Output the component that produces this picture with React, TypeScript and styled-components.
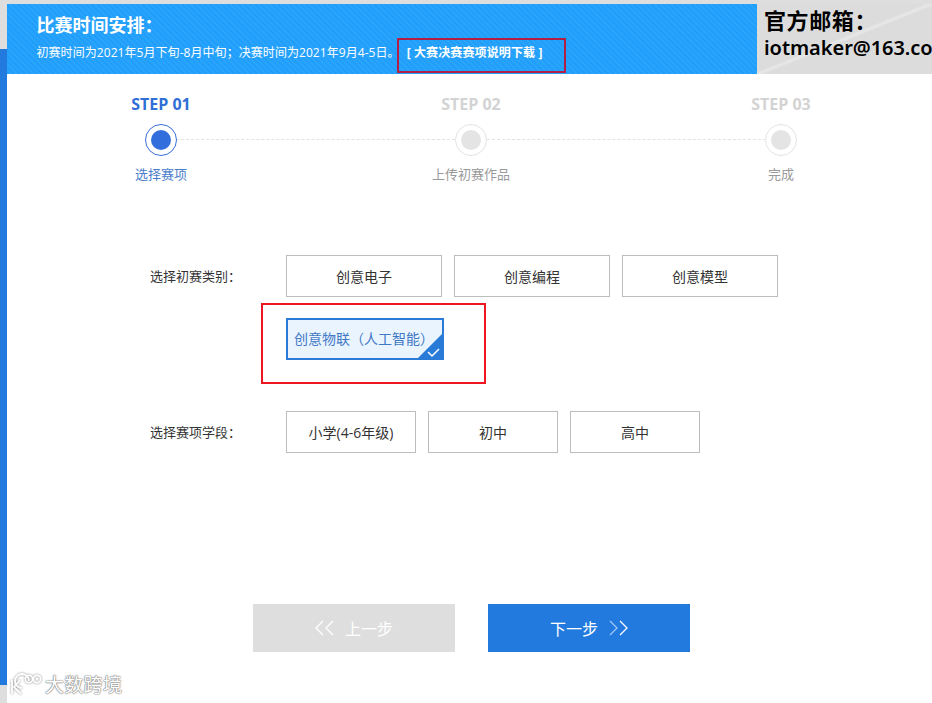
import React from "react";
import styled, { createGlobalStyle } from "styled-components";

const Global = createGlobalStyle`
  html, body { margin: 0; padding: 0; height: 703px; overflow: hidden; background: #fff; }
  * { box-sizing: border-box; }
  body { font-family: "Open Sans", "Noto Sans CJK SC", sans-serif; }
`;
const Page = styled.div`
  position: relative; width: 932px; height: 703px; display: flex; overflow: hidden; background: #fff;
`;
const Rail = styled.div`
  width: 7px; height: 703px; flex: none; display: flex; flex-direction: column;
  background: #dedede;
`;
const RailBlue = styled.div`
  margin-top: 49px; height: 636px; background: #227ade;
`;
const Main = styled.div`flex: 1; display: flex; flex-direction: column; min-width: 0;`;
const TopEdge = styled.div`height: 4px; background: #dedede; flex: none;`;
const Header = styled.div`display: flex; height: 70px; flex: none;`;
const Banner = styled.div`
  width: 750px; padding: 9px 0 0 29.5px; color: #fff; position: relative;
  background: repeating-linear-gradient(45deg, #1f9efb 0, #1f9efb 2px, #2aa3fb 2px, #2aa3fb 4px);
`;
const BannerTitle = styled.div`font-size: 18px; line-height: 24px; font-weight: 700;`;
const BannerText = styled.div`
  font-size: 12px; line-height: 17px; margin-top: 7px; display: flex; white-space: nowrap; letter-spacing: 0.06px;
`;
const BannerLink = styled.span`font-weight: 700; margin-left: 7px; letter-spacing: 0.12px;`;
const Mail = styled.div`
  flex: 1; min-width: 0; overflow: hidden; padding: 3px 0 0 7px; color: #000; white-space: nowrap;
  background: linear-gradient(158deg, #dcdcdc 0 48%, #e6e6e6 49.5% 50.5%, #dcdcdc 52% 100%);
`;
const MailTitle = styled.div`font-size: 22px; line-height: 27px; font-weight: 700; letter-spacing: 0.6px;`;
const MailAddress = styled.div`font-size: 20px; line-height: 28px; font-weight: 600; letter-spacing: -0.05px; font-family: "Noto Sans", sans-serif;`;

const Steps = styled.div`
  margin: 20px 0 0 109px; width: 710px; display: flex; justify-content: space-between; flex: none; position: relative;
`;
const Step = styled.div`
  width: 90px; display: flex; flex-direction: column; align-items: center; position: relative; z-index: 1;
`;
const StepLabel = styled.div<{ $on?: boolean }>`
  font-size: 16px; line-height: 20px; font-weight: 700; color: ${(p) => (p.$on ? "#2f6fd6" : "#d3d3d3")};
`;
const Dot = styled.div<{ $on?: boolean }>`
  width: 32px; height: 32px; margin-top: 10px; border-radius: 50%; background: #fff;
  border: 1px solid ${(p) => (p.$on ? "#3a6fd8" : "#e4e4e4")};
  display: flex; align-items: center; justify-content: center;
  &::after { content: ""; width: 20px; height: 20px; border-radius: 50%; background: ${(p) => (p.$on ? "#336fdc" : "#e4e4e4")}; }
`;
const StepName = styled.div<{ $on?: boolean }>`
  font-size: 13px; line-height: 18px; margin-top: 9px; white-space: nowrap; color: ${(p) => (p.$on ? "#4a7cc9" : "#999")};
`;
const Line = styled.div`
  position: absolute; left: 45px; right: 45px; top: 45px; border-top: 1px dashed #e2e2e2;
`;

const Form = styled.div`margin-top: 72px; flex: none;`;
const Row = styled.div`display: flex; align-items: flex-start; margin-bottom: 51px;`;
const RowLabel = styled.div`
  width: 279px; flex: none; padding: 12px 45px 0 0; text-align: right; font-size: 13px; line-height: 18px; color: #333;
`;
const Options = styled.div`display: flex; flex-wrap: wrap; gap: 21px 12px; width: 500px;`;
const Option = styled.div<{ $w: number; $on?: boolean }>`
  position: relative; overflow: hidden; height: 42px; width: ${(p) => p.$w}px;
  display: flex; align-items: center; justify-content: center;
  font-size: 14px; white-space: nowrap;
  padding-right: ${(p) => (p.$on ? "2px" : "0")};
  padding-bottom: ${(p) => (p.$on ? "2px" : "0")};
  border: ${(p) => (p.$on ? "2px solid #2a7ad8" : "1px solid #bdbdbd")};
  background: ${(p) => (p.$on ? "#eaf4ff" : "#fff")};
  color: ${(p) => (p.$on ? "#3f78c4" : "#333")};
`;
const Corner = styled.svg`position: absolute; right: -2px; bottom: -2px; width: 28px; height: 28px;`;

const Buttons = styled.div`margin: 100px 0 0 246px; display: flex; gap: 33px;`;
const Btn = styled.div<{ $on?: boolean }>`
  width: 202px; height: 48px; display: flex; align-items: center; justify-content: center; gap: 10px;
  font-size: 16px; color: #fff; background: ${(p) => (p.$on ? "#227ade" : "#dedede")};
`;
const Chev = styled.svg`width: 20px; height: 16px; flex: none;`;

const RedBox = styled.div<{ $l: number; $t: number; $w: number; $h: number }>`
  position: absolute; left: ${(p) => p.$l}px; top: ${(p) => p.$t}px; width: ${(p) => p.$w}px; height: ${(p) => p.$h}px;
  border: 2px solid #ee1620; pointer-events: none;
`;
const BannerBox = styled(RedBox)`border-color: #b21f45;`;
const Strip = styled.div`position: absolute; left: 0; bottom: 0; width: 7px; height: 18px; background: #dedede;`;
const Watermark = styled.div`
  position: absolute; left: 9px; top: 672px; display: flex; align-items: center; gap: 2px;
  color: #fff; font-size: 19px; line-height: 26px; letter-spacing: 0.3px;
  text-shadow: 0 0 2px #888, 0 0 1px #777, 0 0 1px #777;
`;
const Logo = styled.svg`width: 34px; height: 26px; filter: drop-shadow(0 0 1px #888);`;

const ChevLeft = () => (
  <Chev viewBox="0 0 20 16" fill="none" stroke="#fff" strokeWidth="1.3">
    <path d="M8 1 1 8l7 7M18 1l-7 7 7 7" />
  </Chev>
);
const ChevRight = () => (
  <Chev viewBox="0 0 20 16" fill="none" strokeWidth="1.3">
    <path d="M2 1l7 7-7 7" stroke="#9cc6f5" />
    <path d="M12 1l7 7-7 7" stroke="#fff" />
  </Chev>
);

export default function App() {
  return (
    <Page>
      <Global />
      <Rail><RailBlue /></Rail>
      <Main>
        <TopEdge />
        <Header>
          <Banner>
            <BannerTitle>比赛时间安排：</BannerTitle>
            <BannerText>
              初赛时间为2021年5月下旬-8月中旬；决赛时间为2021年9月4-5日。
              <BannerLink>[ 大赛决赛赛项说明下载 ]</BannerLink>
            </BannerText>
          </Banner>
          <Mail>
            <MailTitle>官方邮箱：</MailTitle>
            <MailAddress>iotmaker@163.com</MailAddress>
          </Mail>
        </Header>
        <Steps>
          <Line />
          <Step><StepLabel $on>STEP 01</StepLabel><Dot $on /><StepName $on>选择赛项</StepName></Step>
          <Step><StepLabel>STEP 02</StepLabel><Dot /><StepName>上传初赛作品</StepName></Step>
          <Step><StepLabel>STEP 03</StepLabel><Dot /><StepName>完成</StepName></Step>
        </Steps>
        <Form>
          <Row>
            <RowLabel>选择初赛类别：</RowLabel>
            <Options>
              <Option $w={156}>创意电子</Option>
              <Option $w={156}>创意编程</Option>
              <Option $w={156}>创意模型</Option>
              <Option $w={158} $on>
                创意物联（人工智能）
                <Corner viewBox="0 0 28 28">
                  <path d="M28 0V28H0Z" fill="#2a7ad8" />
                  <path d="M12 20l4 4 7-7" fill="none" stroke="#fff" strokeWidth="1.5" />
                </Corner>
              </Option>
            </Options>
          </Row>
          <Row>
            <RowLabel>选择赛项学段：</RowLabel>
            <Options>
              <Option $w={130}>小学(4-6年级)</Option>
              <Option $w={130}>初中</Option>
              <Option $w={130}>高中</Option>
            </Options>
          </Row>
        </Form>
        <Buttons>
          <Btn><ChevLeft />上一步</Btn>
          <Btn $on>下一步<ChevRight /></Btn>
        </Buttons>
      </Main>
      <BannerBox $l={397} $t={38} $w={169} $h={35} />
      <RedBox $l={261} $t={303} $w={225} $h={81} />
      <Strip />
      <Watermark>
        <Logo viewBox="0 0 34 26" fill="none" stroke="#fff" strokeWidth="1.8">
          <path d="M3 8v14M11 8 5 15l7 7" />
          <path d="M20 9a7 7 0 1 0-7 7" />
          <circle cx="20" cy="7" r="3.6" />
          <circle cx="28" cy="7" r="3.6" />
        </Logo>
        大数跨境
      </Watermark>
    </Page>
  );
}
